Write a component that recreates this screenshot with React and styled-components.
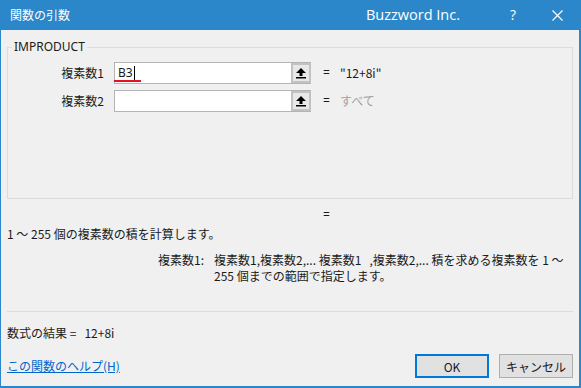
import React from 'react'
import styled, { createGlobalStyle } from 'styled-components'

const GlobalStyle = createGlobalStyle`
  html, body {
    margin: 0;
    padding: 0;
    background: #ffffff;
  }
  * {
    box-sizing: border-box;
  }
`

const FONT = `"Noto Sans CJK JP", "Noto Sans", "Liberation Sans", sans-serif`

const Window = styled.div`
  width: 581px;
  height: 388px;
  display: flex;
  flex-direction: column;
  background: #f0f0f0;
  border-left: 1px solid #2b87c9;
  border-right: 2px solid #2b87c9;
  border-bottom: 2px solid #2b87c9;
  font-family: ${FONT};
  font-size: 12px;
  line-height: 16px;
  color: #1a1a1a;
`

const TitleBar = styled.header`
  height: 30px;
  flex: none;
  display: flex;
  align-items: center;
  background: #2b87c9;
  color: #fff;
  padding-left: 9px;
`

const Title = styled.span`
  flex: 1;
  font-size: 12px;
`

const Brand = styled.span`
  font-family: "Open Sans", "Noto Sans", sans-serif;
  font-size: 14.5px;
  margin-right: 31px;
`

const TitleButton = styled.span`
  width: 44px;
  display: flex;
  justify-content: center;
  font-family: "Open Sans", sans-serif;
  font-size: 14px;
`

const Body = styled.div`
  flex: 1;
  display: flex;
  flex-direction: column;
  padding: 0 6px 0 6px;
`

const Group = styled.fieldset`
  margin: 9px 0 0 0;
  padding: 7px 0 86px 0;
  border: 1px solid #dcdcdc;
  min-width: 0;
`

const Legend = styled.legend`
  margin-left: 4px;
  padding: 0 2px;
  font-family: "Noto Sans", sans-serif;
  font-size: 12px;
  line-height: 16px;
`

const ArgGrid = styled.div`
  display: grid;
  grid-template-columns: 106px 209px 17px 1fr;
  row-gap: 6px;
  align-items: center;
`

const ArgLabel = styled.span`
  text-align: right;
  padding-right: 10px;
`

const InputBox = styled.div`
  position: relative;
  width: 197px;
  height: 22px;
  display: flex;
  border: 1px solid #b4b4b4;
  background: #fff;
`

const InputText = styled.div`
  flex: 1;
  display: flex;
  align-items: center;
  padding-left: 3px;
  font-family: "Noto Sans", sans-serif;
`

const Caret = styled.span`
  width: 1px;
  height: 14px;
  margin-left: 1px;
  background: #000;
`

const SpellMark = styled.span`
  position: absolute;
  left: -1px;
  bottom: 1px;
  width: 27px;
  height: 2px;
  background: #e81123;
`

const RefButton = styled.div`
  width: 20px;
  height: 20px;
  display: flex;
  align-items: center;
  justify-content: center;
  background: #e8e8e8;
  border: 2px solid #c2c2c2;
  margin: 0 -1px 0 0;
`

const Eq = styled.span`
  font-family: "Noto Sans", sans-serif;
`

const Value = styled.span`
  color: ${p => (p.$muted ? '#a0a0a0' : '#1a1a1a')};
  font-family: ${FONT};
`

const EqualsLine = styled.div`
  margin-top: 8px;
  padding-left: 316px;
  font-family: "Noto Sans", sans-serif;
`

const Summary = styled.div`
  margin-top: 3px;
  white-space: nowrap;
`

const ArgHelp = styled.div`
  margin-top: 10px;
  display: flex;
  height: 59px;
`

const HelpLabel = styled.span`
  width: 197px;
  flex: none;
  text-align: right;
`

const HelpText = styled.span`
  margin-left: 10px;
  white-space: pre;
`

const Separator = styled.hr`
  margin: 0;
  border: none;
  border-top: 1px solid #dcdcdc;
`

const Result = styled.div`
  margin-top: 13px;
  white-space: pre;
`

const Footer = styled.div`
  margin-top: 13px;
  display: flex;
  align-items: center;
  gap: 10px;
`

const HelpLink = styled.a`
  flex: 1;
  color: #0066cc;
  text-decoration: underline;
`

const DialogButton = styled.button`
  width: 74px;
  height: 24px;
  padding: 0;
  background: #e1e1e1;
  border: ${p => (p.$primary ? '2px solid #0078d7' : '1px solid #adadad')};
  font-family: ${FONT};
  font-size: 12px;
  color: #1a1a1a;
`

const UpArrow = () => (
  <svg width="10" height="11" viewBox="0 0 10 11">
    <path d="M5 0 L10 5 L6.5 5 L6.5 8 L3.5 8 L3.5 5 L0 5 Z" fill="#000" />
    <rect x="0" y="9" width="10" height="1.5" fill="#000" />
  </svg>
)

const CloseIcon = () => (
  <svg width="11" height="11" viewBox="0 0 11 11">
    <path d="M0.5 0.5 L10.5 10.5 M10.5 0.5 L0.5 10.5" stroke="#fff" strokeWidth="1.2" />
  </svg>
)

const args = [
  { label: '複素数1', text: 'B3', value: '"12+8i"', active: true },
  { label: '複素数2', text: '', value: 'すべて', muted: true },
]

export default function App() {
  return (
    <>
      <GlobalStyle />
      <Window>
        <TitleBar>
          <Title>関数の引数</Title>
          <Brand>Buzzword Inc.</Brand>
          <TitleButton>?</TitleButton>
          <TitleButton><CloseIcon /></TitleButton>
        </TitleBar>
        <Body>
          <Group>
            <Legend>IMPRODUCT</Legend>
            <ArgGrid>
              {args.map(a => (
                <React.Fragment key={a.label}>
                  <ArgLabel>{a.label}</ArgLabel>
                  <InputBox>
                    <InputText>
                      {a.text}
                      {a.active && <Caret />}
                    </InputText>
                    {a.active && <SpellMark />}
                    <RefButton><UpArrow /></RefButton>
                  </InputBox>
                  <Eq>=</Eq>
                  <Value $muted={a.muted}>{a.value}</Value>
                </React.Fragment>
              ))}
            </ArgGrid>
          </Group>
          <EqualsLine>=</EqualsLine>
          <Summary>1 ～ 255 個の複素数の積を計算します。</Summary>
          <ArgHelp>
            <HelpLabel>複素数1:</HelpLabel>
            <HelpText>{'複素数1,複素数2,... 複素数1   ,複素数2,... 積を求める複素数を 1 ～\n255 個までの範囲で指定します。'}</HelpText>
          </ArgHelp>
          <Separator />
          <Result>{'数式の結果 =   12+8i'}</Result>
          <Footer>
            <HelpLink href="#">この関数のヘルプ(H)</HelpLink>
            <DialogButton $primary>OK</DialogButton>
            <DialogButton>キャンセル</DialogButton>
          </Footer>
        </Body>
      </Window>
    </>
  )
}
